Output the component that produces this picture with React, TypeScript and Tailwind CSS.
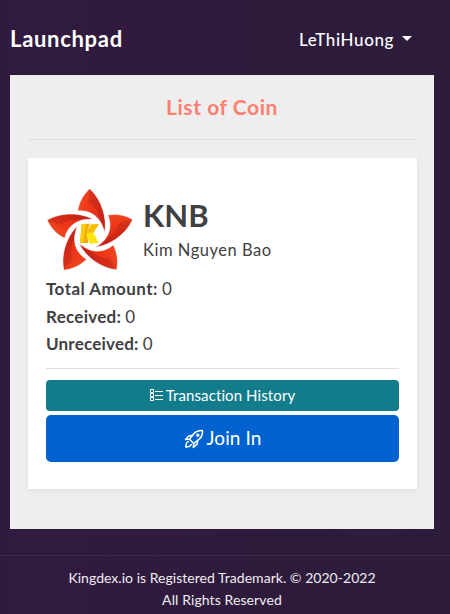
import React from "react";

const PETAL = "M161 26 C141 44 129 66 125 93 C164 89 196 112 206 158 C214 118 199 60 161 26Z";

function FlowerLogo() {
  return (
    <svg viewBox="30 21 270 258" className="h-[86px] w-[90px] shrink-0">
      <defs>
        <linearGradient id="petal" x1="0" y1="0.3" x2="1" y2="0.7">
          <stop offset="0" stopColor="#f24a1e" />
          <stop offset="0.45" stopColor="#e5361c" />
          <stop offset="1" stopColor="#cc2418" />
        </linearGradient>
      </defs>
      {[0, 72, 144, 216, 288].map((a) => (
        <g key={a} transform={`rotate(${a} 162 161)`}>
          <path d={PETAL} fill="url(#petal)" stroke="#fff" strokeWidth="2" />
          <path d="M161 28 L158 68 L181 88 L204 150 C211 116 198 60 161 28Z" fill="#b01c12" opacity="0.28" />
          <path d="M158 68 L127 91 C158 90 179 102 192 122 L181 88Z" fill="#ff3a10" opacity="0.35" />
        </g>
      ))}
      <path d="M137 132 L162 131 L153 160 L157 189 L132 189Z" fill="#f5ad00" />
      <path d="M137 132 L150 131 L141 189 L132 189Z" fill="#ffcc12" />
      <path d="M165 133 L189 132 L172 159 L150 163Z" fill="#f6bd00" />
      <path d="M150 161 L171 156 L188 188 L162 192Z" fill="#ffe414" />
    </svg>
  );
}

function ListIcon() {
  return (
    <svg viewBox="0 0 13 13" className="mr-[3px] h-[13px] w-[13px]" fill="none" stroke="currentColor" strokeWidth="1">
      <path d="M.5.5h3v3h-3zM.5 4.500h3v3h-3zM.5 8.500h3v3h-3zM5 2.500h8M5 6.500h8M5 10.500h8" />
    </svg>
  );
}

function RocketIcon() {
  return (
    <svg
      viewBox="0 0 20 20"
      className="mr-[3px] h-5 w-5"
      fill="none"
      stroke="currentColor"
      strokeWidth="1.5"
      strokeLinejoin="round"
      strokeLinecap="round"
    >
      <path d="M18.500 1.500c-4.300-.2-6.700.8-8.700 3.300L5.500 10.300l4.200 4.200 5.500-4.300c2.500-2 3.500-4.400 3.300-8.700z" />
      <path d="M8.800 6.200 4.800 7 1.500 10.600l4-.3M13.800 11.300l-.7 3.800-3.800 3.400.4-4" />
      <circle cx="13.800" cy="6.200" r="1" />
      <path d="M4.300 12.600c-1.500.6-2.400 2.300-2.500 5.400 3-.1 4.800-1 5.400-2.500" />
    </svg>
  );
}

export default function App() {
  return (
    <div className="flex h-[614px] w-[450px] flex-col overflow-hidden bg-gradient-to-r from-[#311a3f] to-[#2c1c3a] font-['Lato','Open_Sans',sans-serif] text-[#3f4042]">
      <header className="flex h-[75px] shrink-0 items-center justify-between pt-[2px] pr-[38px] pl-[10px] text-white">
        <h1 className="text-[22px] leading-7 font-bold whitespace-nowrap"><span className="tracking-[0.7px]">Launchpad</span></h1>
        <div className="flex items-center gap-[8px] pt-[2px] text-[17px] leading-6 font-medium whitespace-nowrap">
          <span className="tracking-[0.6px]">LeThiHuong</span>
          <span className="mb-[3px] border-x-[5px] border-t-[5px] border-x-transparent border-t-white" />
        </div>
      </header>

      <main className="mr-[16px] ml-[10px] h-[454px] shrink-0 bg-[#eeeeee] px-[18px]">
        <h2 className="flex h-[65px] items-center justify-center border-b border-[#dfdfdf] text-[21px] font-bold text-[#fb8072]">
          <span className="tracking-[0.55px]">List of Coin</span>
        </h2>
        <section className="mt-[18px] h-[331px] w-[389px] bg-white px-[18px] pt-[29px] shadow-[0_2px_5px_rgba(0,0,0,0.06)]">
          <div className="flex h-[88px]">
            <FlowerLogo />
            <div className="pl-[7px]">
              <h3 className="pt-[9px] text-[31px] leading-[38px] font-bold">KNB</h3>
              <p className="pt-[4px] text-[16.500px] leading-6 whitespace-nowrap"><span className="tracking-[0.53px]">Kim Nguyen Bao</span></p>
            </div>
          </div>
          <dl className="text-[17px] leading-[27.500px]">
            <div className="flex gap-[4px]"><dt className="font-bold tracking-[0.45px]">Total Amount:</dt><dd>0</dd></div>
            <div className="flex gap-[4px]"><dt className="font-bold tracking-[0.27px]">Received:</dt><dd>0</dd></div>
            <div className="flex gap-[4px]"><dt className="font-bold tracking-[0.21px]">Unreceived:</dt><dd>0</dd></div>
          </dl>
          <hr className="mt-[10px] border-[#dedede]" />
          <button className="mt-[11px] flex h-[31px] w-full items-center justify-center rounded-[4px] bg-[#137c8b] text-[15px] text-white">
            <ListIcon />
            <span className="tracking-[0.1px]">Transaction History</span>
          </button>
          <button className="mt-[4px] flex h-[47px] w-full items-center justify-center rounded-[5px] bg-[#0062d0] pt-px text-[19px] text-white">
            <RocketIcon />
            <span className="tracking-[0.1px]">Join In</span>
          </button>
        </section>
      </main>

      <footer className="mt-[26px] flex-1 border-t border-[#3b2848] pt-[11px] pr-[6px] text-center text-[14px] leading-[22px] text-[#f1edf3]">
        <p><span className="tracking-[0.03px]">Kingdex.io is Registered Trademark. © 2020-2022</span></p>
        <p><span className="tracking-[0.1px]">All Rights Reserved</span></p>
      </footer>
    </div>
  );
}
